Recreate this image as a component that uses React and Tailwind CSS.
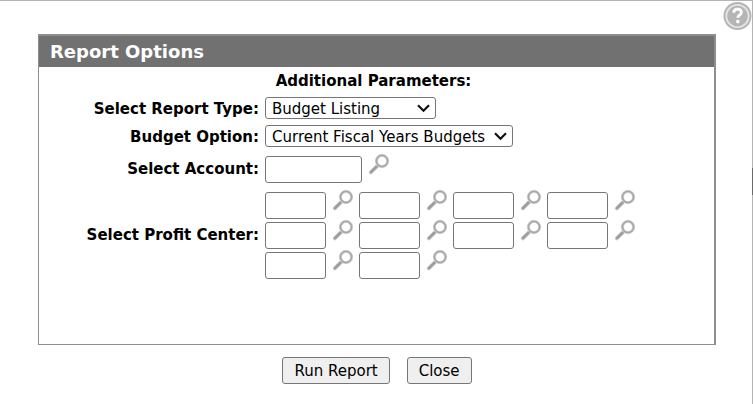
import React from 'react';

const profitCenters = Array.from({ length: 10 }, (_, i) => i + 1);

function LookupButton({ label }) {
  return (
    <button type="button" aria-label={label} className="cursor-pointer">
      <svg className="block h-5 w-5 overflow-visible" viewBox="0 0 20 20" fill="none">
        <path d="M8.6 10.6 1.8 17.4" stroke="#cccccc" strokeWidth="4" strokeLinecap="round" />
        <path d="M8.6 10.6 2 17.2" stroke="#9c9c9c" strokeWidth="2.6" strokeLinecap="round" />
        <circle cx="13" cy="6" r="5.6" stroke="#dadada" strokeWidth="3.2" />
        <circle cx="13" cy="6" r="5.6" stroke="#a8a8a8" strokeWidth="1.8" />
      </svg>
    </button>
  );
}

function HelpButton() {
  return (
    <button type="button" aria-label="Help" className="absolute top-0 right-0 cursor-pointer">
      <svg className="block h-[30px] w-[29px]" viewBox="0 0 29 30">
        <circle cx="14.5" cy="15" r="14" fill="#b5b5b5" />
        <circle cx="14.5" cy="15" r="11.2" fill="#b5b5b5" stroke="#e4e4e4" strokeWidth="1.8" />
        <path
          d="M10.8 11.8c0-2.4 1.6-3.6 3.8-3.6s3.8 1.3 3.8 3.2c0 2.7-3.6 2.8-3.6 5.4"
          fill="none"
          stroke="#fff"
          strokeWidth="2.8"
        />
        <circle cx="14.8" cy="20.6" r="1.8" fill="#fff" />
      </svg>
    </button>
  );
}

function Select({ id, width, children }) {
  return (
    <div className={`relative ${width}`}>
      <select
        id={id}
        className="block h-[22px] w-full appearance-none rounded-[3px] border border-[#767676] bg-white pt-px pr-5 pl-1.5 leading-5"
      >
        {children}
      </select>
      <svg
        className="pointer-events-none absolute top-[7px] right-1.5 h-[9px] w-[13px]"
        viewBox="0 0 13 9"
        fill="none"
      >
        <path d="M1 1.2 6.5 6.8 12 1.2" stroke="#111" strokeWidth="2.2" />
      </svg>
    </div>
  );
}

export default function App() {
  return (
    <div className="relative min-h-screen border-t border-r border-[#b4b4b4] bg-white px-[38px] pt-[33px] pr-9 text-[15px] leading-5 text-black font-['Verdana','DejaVu_Sans',sans-serif]">
      <HelpButton />
      <div className="absolute top-[167px] -right-px h-[27px] w-px bg-[#6a6a6a]" />

      <form>
        <section className="min-h-[311px] border-t-2 border-r-2 border-b border-l border-[#8e8e8e]">
          <h1 className="bg-[#717171] px-[11px] py-1 text-lg leading-[23px] font-bold text-white">
            Report Options
          </h1>
          <h2 className="mt-1 mr-1.5 text-center font-bold">Additional Parameters:</h2>

          <div className="mt-1.5 grid grid-cols-[220px_1fr] items-center gap-x-1.5 gap-y-1.5">
            <label htmlFor="report-type" className="pt-0.5 text-right font-bold">Select Report Type:</label>
            <Select id="report-type" width="w-[171px]">
              <option>Budget Listing</option>
            </Select>

            <label htmlFor="budget-option" className="pt-0.5 text-right font-bold">Budget Option:</label>
            <Select id="budget-option" width="w-[248px]">
              <option>Current Fiscal Years Budgets</option>
            </Select>
          </div>

          <div className="mt-2 grid grid-cols-[220px_1fr] items-center gap-x-1.5 gap-y-2">
            <label htmlFor="account" className="text-right font-bold">Select Account:</label>
            <div className="flex items-start gap-[7px]">
              <input id="account" type="text" className="mt-px h-[27px] w-[97px] rounded-[3px] border border-[#767676] bg-white px-1" />
              <LookupButton label="Look up account" />
            </div>

            <label htmlFor="profit-center-1" className="text-right font-bold">Select Profit Center:</label>
            <div className="grid grid-cols-[repeat(4,94px)] gap-y-0.5">
              {profitCenters.map((n) => (
                <div key={n} className="flex items-start gap-[7px]">
                  <input
                    id={`profit-center-${n}`}
                    type="text"
                    aria-label={`Profit center ${n}`}
                    className="mt-px h-[27px] w-[61px] rounded-[3px] border border-[#767676] bg-white px-1"
                  />
                  <LookupButton label={`Look up profit center ${n}`} />
                </div>
              ))}
            </div>
          </div>
        </section>

        <div className="mt-3 flex justify-center gap-[17px]">
          <button type="button" className="h-[27px] rounded-[3px] border border-[#767676] bg-[#efefef] px-[11px]">
            Run Report
          </button>
          <button type="button" className="h-[27px] rounded-[3px] border border-[#767676] bg-[#efefef] px-[11px]">
            Close
          </button>
        </div>
      </form>
    </div>
  );
}
